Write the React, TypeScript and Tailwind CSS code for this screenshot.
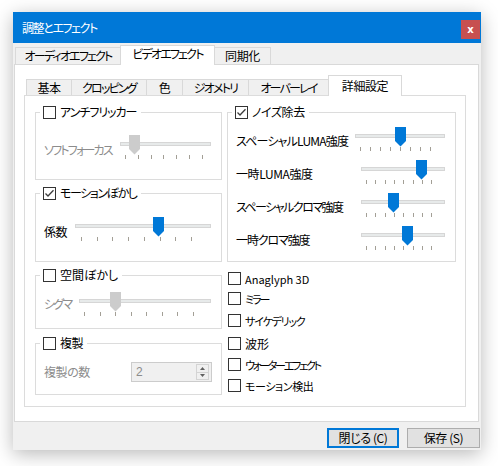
import React from "react";

const ui =
  "font-['Noto_Sans_CJK_JP','Noto_Sans',sans-serif] [font-feature-settings:'palt'] text-[12px] leading-[16px] tracking-[-0.4px] whitespace-nowrap";
const kana = "tracking-[-1.8px]";

function Check({ checked }: { checked?: boolean }) {
  return (
    <span className="flex h-[13px] w-[13px] shrink-0 items-center justify-center border border-[#333333] bg-white">
      {checked && (
        <svg width="11" height="11" viewBox="0 0 11 11">
          <path d="M1.5 5.5 L4 8 L9.5 2.2" fill="none" stroke="#3c3c3c" strokeWidth="1.3" />
        </svg>
      )}
    </span>
  );
}

type SliderProps = {
  width: number;
  thumb: number;
  ticks: number;
  tickStart: number;
  tickStep: number;
  enabled?: boolean;
};

function Slider({ width, thumb, ticks, tickStart, tickStep, enabled }: SliderProps) {
  const t = Math.round(thumb - 5.5);
  return (
    <svg width={width} height={25} className="block shrink-0 overflow-visible">
      <rect x={0.5} y={7.5} width={width - 1} height={3} fill="#e7eaea" stroke="#d6d6d6" shapeRendering="crispEdges" />
      {Array.from({ length: ticks }, (_, i) => {
        const x = Math.round(tickStart + i * tickStep) + 0.5;
        return <line key={i} x1={x} x2={x} y1={20} y2={24} stroke="#a39f96" shapeRendering="crispEdges" />;
      })}
      <polygon
        points={`${t},0 ${t + 11},0 ${t + 11},14 ${t + 5.5},19.5 ${t},14`}
        fill={enabled ? "#0078d7" : "#cccccc"}
      />
    </svg>
  );
}

function GroupBox({
  label,
  checked,
  labelClass = "",
  bodyClass,
  children,
}: {
  label: string;
  checked?: boolean;
  labelClass?: string;
  bodyClass: string;
  children?: React.ReactNode;
}) {
  return (
    <div>
      <div className="flex h-[16px]">
        <div className="mt-[8px] w-[5px] border-l border-t border-[#dcdcdc]" />
        <div className="ml-[3px] flex items-center gap-[4px] pr-[4px]">
          <Check checked={checked} />
          <span className={labelClass}>{label}</span>
        </div>
        <div className="mt-[8px] flex-1 border-r border-t border-[#dcdcdc]" />
      </div>
      <div className={`border-x border-b border-[#dcdcdc] ${bodyClass}`}>{children}</div>
    </div>
  );
}

const outerTabs = [
  { label: "オーディオエフェクト", w: "w-[106px]", k: true },
  { label: "ビデオエフェクト", w: "w-[95px]", k: true, active: true },
  { label: "同期化", w: "w-[57px]" },
];

const innerTabs = [
  { label: "基本", w: "w-[46px]" },
  { label: "クロッピング", w: "w-[76px]", k: true },
  { label: "色", w: "w-[37px]" },
  { label: "ジオメトリ", w: "w-[67px]", k: true },
  { label: "オーバーレイ", w: "w-[81px]", k: true },
  { label: "詳細設定", w: "w-[74px]", active: true },
];

const noiseRows = [
  { label: "スペーシャルLUMA強度", width: 90, thumb: 45.5, step: 10, tr: "tracking-[-0.8px]" },
  { label: "一時LUMA強度", width: 84, thumb: 60.5, step: 9.3, tr: "tracking-[-0.4px]" },
  { label: "スペーシャルクロマ強度", width: 84, thumb: 32.5, step: 9.3, tr: "tracking-[-1.5px]" },
  { label: "一時クロマ強度", width: 84, thumb: 46.5, step: 9.3, tr: "tracking-[-1.1px]" },
];

const effects = [
  { label: "Anaglyph 3D", mt: "", tr: "text-[11px] tracking-[0px]" },
  { label: "ミラー", mt: "mt-[7px]", tr: "text-[11px] tracking-[-2px]" },
  { label: "サイケデリック", mt: "mt-[9px]", tr: "text-[11px] tracking-[-1.2px]" },
  { label: "波形", mt: "mt-[10px]", tr: "text-[12px] tracking-[0px]" },
  { label: "ウォーターエフェクト", mt: "mt-[8px]", tr: "text-[11px] tracking-[-2.2px]" },
  { label: "モーション検出", mt: "mt-[8px]", tr: "text-[11px] tracking-[-0.4px]" },
];

export default function App() {
  return (
    <div className={`h-[466px] w-[498px] bg-white pl-[13px] pt-[12px] text-black ${ui}`}>
      <div className="flex h-[438px] w-[468px] flex-col bg-[#f0f0f0] shadow-[0_4px_18px_rgba(0,0,0,0.28)]">
        {/* title bar */}
        <div className="flex h-[31px] shrink-0 items-center bg-[#0078d7] pl-[9px]">
          <span className="tracking-[-1.4px] text-white">調整とエフェクト</span>
          <button className="mr-[1px] ml-auto mt-[8px] flex h-[19px] w-[19px] items-center justify-center self-start bg-[#c75050] font-['DejaVu_Sans',sans-serif] text-[10px] font-bold leading-none tracking-normal text-white">
            x
          </button>
        </div>

        {/* outer tabs */}
        <div className="flex h-[21px] shrink-0 items-end pl-[2px]">
          {outerTabs.map((tab, i) => (
            <div
              key={tab.label}
              className={`flex items-center justify-center border-x border-t border-[#d9d9d9] ${tab.w} ${
                i > 0 ? "-ml-px" : ""
              } ${tab.k ? kana : ""} ${
                tab.active ? "relative z-10 -mb-px h-[20px] bg-white pb-[3px]" : "h-[17px] bg-[#f0f0f0]"
              }`}
            >
              {tab.label}
            </div>
          ))}
        </div>

        {/* outer panel */}
        <div className="ml-[1px] flex h-[358px] w-[465px] shrink-0 flex-col border border-[#d9d9d9] bg-white pt-[10px]">
          <div className="ml-[11px] flex h-[20px] items-end">
            {innerTabs.map((tab, i) => (
              <div
                key={tab.label}
                className={`flex items-center justify-center border-x border-t border-[#d9d9d9] ${tab.w} ${
                  i > 0 ? "-ml-px" : ""
                } ${tab.k ? kana : ""} ${
                  tab.active ? "relative z-10 -mb-px h-[21px] bg-white pb-[1px]" : "h-[16px] bg-[#f0f0f0]"
                }`}
              >
                {tab.label}
              </div>
            ))}
          </div>

          {/* inner panel */}
          <div className="ml-[9px] flex h-[312px] w-[442px] items-start gap-[5px] border border-[#dcdcdc] bg-white pl-[10px] pt-[8px]">
            {/* left column */}
            <div className="flex w-[187px] flex-col">
              <GroupBox
                label="アンチフリッカー"
                labelClass="tracking-[-1px]"
                bodyClass="flex h-[60px] pl-[8px] pr-[10px] pt-[15px]"
              >
                <span className={`mt-[7px] text-[#8c8c8c] ${kana}`}>ソフトフォーカス</span>
                <div className="ml-auto">
                  <Slider width={91} thumb={14.5} ticks={7} tickStart={5} tickStep={12.83} />
                </div>
              </GroupBox>
              <div className="mt-[5px]">
                <GroupBox
                  label="モーションぼかし"
                  labelClass="tracking-[-1.4px]"
                  checked
                  bodyClass="flex h-[61px] pl-[8px] pr-[10px] pt-[16px]"
                >
                  <span className="mt-[7px]">係数</span>
                  <div className="ml-auto">
                    <Slider width={136} thumb={83.5} ticks={8} tickStart={6} tickStep={15.7} enabled />
                  </div>
                </GroupBox>
              </div>
              <div className="mt-[5px]">
                <GroupBox label="空間ぼかし" labelClass="tracking-[0px]" bodyClass="flex h-[46px] pl-[8px] pr-[10px] pt-[9px]">
                  <span className={`mt-[4px] text-[#8c8c8c] ${kana}`}>シグマ</span>
                  <div className="ml-auto">
                    <Slider width={132} thumb={36} ticks={8} tickStart={5} tickStep={15.5} />
                  </div>
                </GroupBox>
              </div>
              <div className="mt-[6px]">
                <GroupBox label="複製" bodyClass="flex h-[44px] items-start pl-[8px] pr-[9px] pt-[11px]">
                  <span className="mt-[2px] text-[#8c8c8c]">複製の数</span>
                  <div className="ml-auto flex h-[20px] w-[81px] items-center border border-[#cccccc] bg-[#f0f0f0] pl-[4px] text-[#8c8c8c]">
                    <span className="flex-1 font-['Liberation_Sans',sans-serif]">2</span>
                    <div className="mr-[2px] flex h-[16px] w-[13px] flex-col border border-[#d4d4d4]">
                      <div className="flex flex-1 items-center justify-center">
                        <svg width="5" height="3" viewBox="0 0 5 3">
                          <path d="M0 3 L2.5 0 L5 3 Z" fill="#606060" />
                        </svg>
                      </div>
                      <div className="h-px bg-[#d4d4d4]" />
                      <div className="flex flex-1 items-center justify-center">
                        <svg width="5" height="3" viewBox="0 0 5 3">
                          <path d="M0 0 L2.5 3 L5 0 Z" fill="#606060" />
                        </svg>
                      </div>
                    </div>
                  </div>
                </GroupBox>
              </div>
            </div>

            {/* right column */}
            <div className="flex w-[229px] flex-col">
              <GroupBox label="ノイズ除去" checked bodyClass="h-[142px] pl-[8px] pr-[10px] pt-[7px]">
                {noiseRows.map((row) => (
                  <div key={row.label} className="flex h-[33px] items-start">
                    <span className={`mt-[6px] ${row.tr}`}>{row.label}</span>
                    <div className="ml-auto">
                      <Slider width={row.width} thumb={row.thumb} ticks={8} tickStart={5} tickStep={row.step} enabled />
                    </div>
                  </div>
                ))}
              </GroupBox>
              <div className="mt-[10px] flex flex-col pl-[1px]">
                {effects.map((e) => (
                  <div key={e.label} className={`flex h-[13px] items-center gap-[4px] ${e.mt}`}>
                    <Check />
                    <span className={e.tr}>{e.label}</span>
                  </div>
                ))}
              </div>
            </div>
          </div>
        </div>

        {/* buttons */}
        <div className="mt-[6px] flex justify-end gap-[8px] pr-[1px]">
          <button className="flex h-[20px] w-[72px] items-center justify-center border-2 border-[#0078d7] bg-[#e1e1e1]">
            閉じる (C)
          </button>
          <button className="flex h-[20px] w-[73px] items-center justify-center border border-[#adadad] bg-[#e1e1e1]">
            保存 (S)
          </button>
        </div>
      </div>
    </div>
  );
}
